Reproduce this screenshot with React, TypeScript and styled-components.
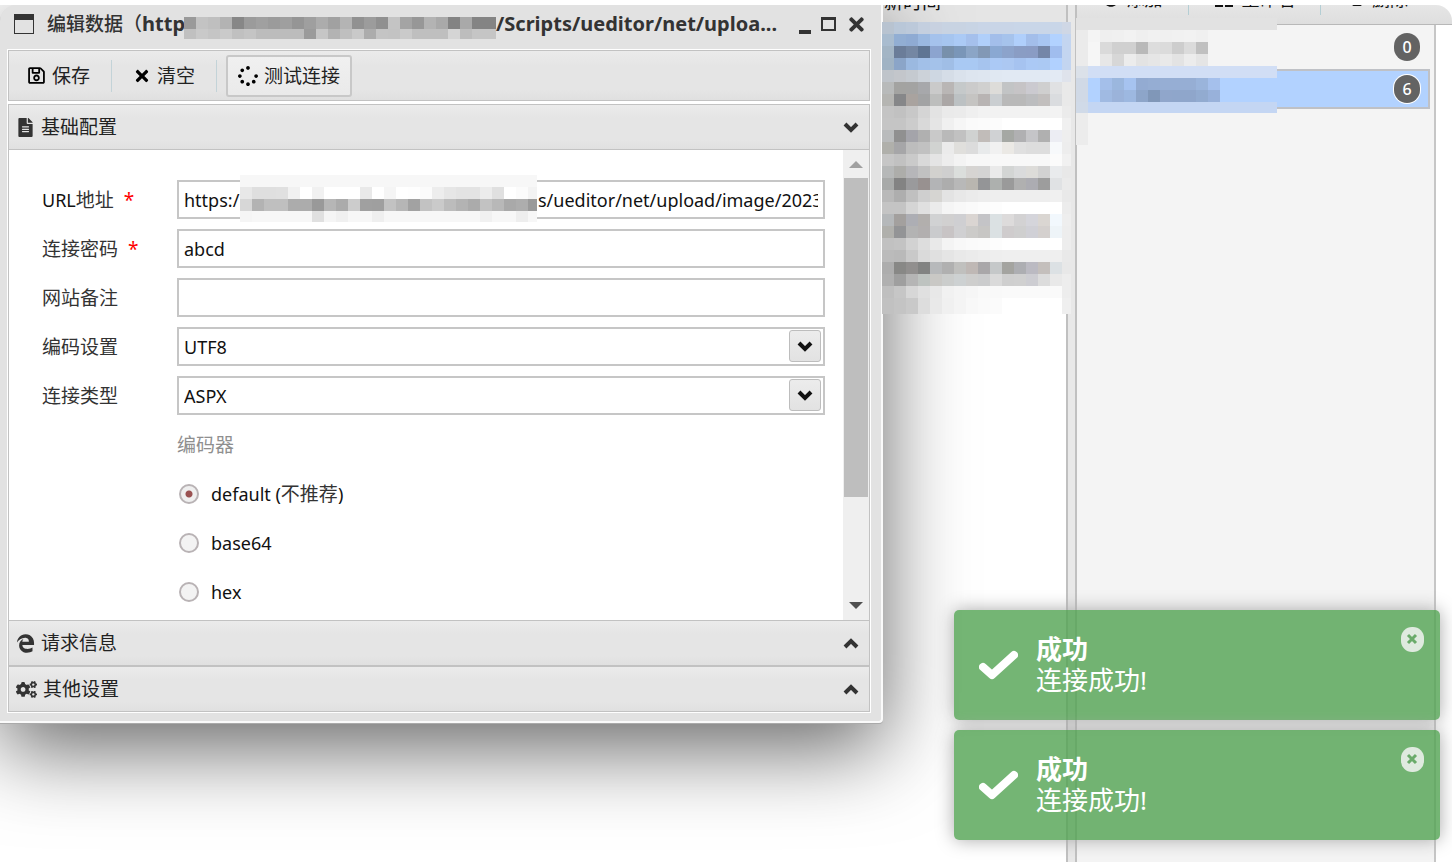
import React from 'react';
import styled, { createGlobalStyle } from 'styled-components';
import { FaRegSave, FaTimes, FaSpinner, FaFileAlt, FaCogs, FaPlusCircle, FaTrash, FaEdgeLegacy } from 'react-icons/fa';

const FONT = '"Noto Sans", "Noto Sans CJK SC", sans-serif';

const GlobalStyle = createGlobalStyle`
  * { box-sizing: border-box; }
  body { margin: 0; background: #fff; font-family: ${FONT}; font-size: 18px; color: #111; }
  button, input, select { font: inherit; color: inherit; }
`;

/* ---------- mosaic over private values ---------- */

const CELL = 12;

const MosaicSvg = styled.svg`
  display: block;
  flex: none;
`;

const toColor = (token: string) => (token.length === 2 ? `#${token}${token}${token}` : `#${token}`);

function Mosaic({ rows, width, height }: { rows: string[]; width: number; height: number }) {
  return (
    <MosaicSvg width={width} height={height} shapeRendering="crispEdges" aria-hidden="true">
      {rows.map((row, y) => {
        const cells = row.split(' ');
        const h = y === rows.length - 1 ? height - y * CELL : CELL;
        return cells.map((cell, x) => (
          <rect
            key={`${x}-${y}`}
            x={x * CELL}
            y={y * CELL}
            width={x === cells.length - 1 ? width - x * CELL : CELL}
            height={h}
            fill={toColor(cell)}
          />
        ));
      })}
    </MosaicSvg>
  );
}

const TITLE_MOSAIC = [
  '9a c3 bf b3 87 9b a0 9b 9f 95 9f ac a1 b4 91 9c 90 c4 a4 97 b3 a9 83 a9 84 84',
  'c0 c9 c5 ca c0 c4 bc bc bc bc 9b c6 b3 bf c9 ac c4 c3 ca bf bf bf d5 bd c5 c5',
];

const URL_MOSAIC = [
  'f7',
  'e8 df df e0 f1 ff f1 ff ff ff e9 ff f5 ff fe fb ed e6 e3 e3 ec e0 ff fb f3',
  'd7 b3 bf bf ac ac 99 b6 ab cc a0 9f c2 b6 a2 c2 ca bc b3 ab c2 b8 a9 ad 9a',
  'f5 f7 f7 f7 f7 f7 e0 f5 f0 f7 f7 ef f7 f7 f7 f7 f7 f7 f7 f7 f1 f7 f7 ee f7',
];

const TIMES_MOSAIC = [
  'b8c3d0 b9c7d8 bcc9da c4cfdf c8d1e0 c8d3e2 c8d3e2 c8d4e4 c9d5e7 c9d5e7 c9d5e7 c9d6e8 c9d6e8 c9d6e8 c9d6e8 cfd7e5',
  'a9bccf 92aed3 8fabd3 9ab8e0 a5c2ec a6c5ef abcaf5 a5c0ec b0cffa a3beea a6c3ec b0cffb a3beea a8c6f2 b2d2ff c3d5f0',
  'a3b5c5 6b7d99 7487a3 5f7593 8ca4cf 7890ab 7a96b8 8ba5c6 8298b5 8aa8d2 8ca3cb 8a9dc4 8a9cc4 7486a8 a0bdee c3d5f0',
  'a0b3c4 8ba5c8 9bb9e0 a2c0e8 a4c2ea a0bee6 a9c9f3 a9c9f3 a6c4ee abc9f5 acc8f2 a6c3f0 abc9f5 abc9f3 b1d1ff c3d5f0',
  'bfc4ca c3c6cb c5cad0 ccd2d9 ced7e2 d5dde7 dae2ec dde5ef dee6f0 e0e8f2 e1e9f3 e1e9f3 e1e9f3 e1e9f3 e3eaf4 dfe3ec',
  'b8baba a3a3a1 a3a3a2 a7a8ab ca b9b6b5 c5c9ca cb d0d0cf dddcd9 c2c4c5 c6c4c6 cbcad0 cf e0e1e3 e9',
  'b5b5b2 868789 a9a39f a2a3a4 bdbebd aba7a6 bcc1c3 c5c4c2 b8b4b3 caced1 b9 b9 bcbdbf c2bfbe dadcdf e9',
  'c4 c1 c8 d5 e3 ea eb ef f2 f2 f2 f2 f2 f2 f3 eb',
  'c5 c5 cc d9 e5 f0 f6 fa fb fc ff ff ff ff ff f0',
  'b9bbbc 90 a4a4aa b0 c9 b9 c1 d0d2d1 c1bcb9 d0d2d4 a5a8a4 b0b0b2 c5c5c8 b0 ecedf3 ee',
  'b0b0ab a6a6a8 bd c1 d1d3d1 eb e0dfdc dc e8eaeb f1 ebe9e5 e0 dd dd f7f9fb ed',
  'c6 c1 ca d9 e4 ed f3 f7 f7 f8 f8 f8 f8 f8 fb f1',
  'b6b8b8 adadaa b6b6b9 c1 d2d1ce cf dbdedc d6d4d2 d4 ea d3d5d4 dadbdc dddcd9 d2 e9ebed e8',
  'a8aaa9 83 9a9a9c 989190 b3b4b6 ad b8 b9b6b0 949597 adb0ae 9a b0 acacb2 9d e0e2e4 ea',
  'b9 ae c0 cf d6d5d2 e3 e8 eb ed ee ee ee ee ee f0 e9',
  'c4 c4 d5 e0 eb f5 f8 fa fc fd ff ff ff ff ff ec',
  'b5b8ba a3a09e adaeb4 b2afad d1d2d3 d1d0d0 cfcfd2 dad5d2 c4c4c7 dbe1e3 dddbdb d3d2d3 d5d5db dad6d2 f2f8fd ee',
  'b0b0ac 939496 b3 b2afaf cacbcd c8c4c5 d0d0d2 cccbc9 c7c6c4 dbe1e3 cfcccd cf d0d0d6 d4d0ce eef4f8 ed',
  'c1 c3 d2 dd e9 f4 f8 fa fb fd ff ff ff ff ff ed',
  'bb b9 c9 da e0 e5 e9 eb ed ee ef ef ef ef ef e9',
  'ad 888886 918f8e 828382 b7b9bb b0 c0c0be bfb8b5 a9a7a9 c5c8c9 a4a4a0 adaeb2 bbbac2 c4bfbc dce1e4 e8',
  'b0 9f b5 bec3c0 c9c8c5 cbcdcc cdd1d2 cececd cbcccd da cf d0 cdcdd2 dc e9 ed',
  'bf c6 d7 e0 e8 f1 f4 f6 f9 f9 fa fa fa fa fa ed',
  'c1 c4 c9 dd e9 f0 f4 f8 fa fb ff ff ff ff ff ef',
];

const GROUPS_MOSAIC = [
  'e2',
  'eb f4 ef f0 f2 ef f1 f0 f1 f2 f0 f4 f4 f4 f4 f4 f4',
  'eb f6 da d0 d0 b9 dd db cd db c0 f4 f4 f4 f4 f4 f4',
  'eb f6 e7 d7 ec e3 e6 e9 e3 ec e5 f4 f4 f4 f4 f4 f4',
  'dbe1e9 d1def5',
  'd0d9e6 b2d2ff a4bfea 9bb7de a6c3f0 93abd2 95add3 96aed4 96aed4 96aed4 9ab4db a5c0ec b2d2ff b2d2ff b2d2ff b2d2ff b2d2ff',
  'd0d9e6 b2d2ff a0bae2 9bb3da 9db8e0 8da5c9 8097b8 90a6cb 8fa6cb 8fa6cb 92abd0 98b1da b2d2ff b2d2ff b2d2ff b2d2ff b2d2ff',
  'd0dae8 c4d6f3',
];

/* fill a short row up to the column count with its last value */
const spread = (rows: string[], columns: number) =>
  rows.map((row) => {
    const cells = row.split(' ');
    while (cells.length < columns) cells.push(cells[cells.length - 1]);
    return cells.join(' ');
  });

/* ---------- page behind the dialog ---------- */

const Page = styled.main`
  position: relative;
  display: flex;
  min-height: 100vh;
  padding-top: 5px;
  overflow: hidden;
`;

const TimesPanel = styled.section`
  flex: 1;
  display: flex;
  flex-direction: column;
  align-items: flex-end;
`;

const TimesHeader = styled.div`
  width: 184px;
  height: 17px;
  overflow: hidden;
  background: #e5e5e5;
  border-left: 1px solid #fff;
  font-size: 19px;
  line-height: 19px;

  span {
    display: block;
    margin: -12px 0 0 1px;
  }
`;

const Covered = styled.div`
  position: relative;
  z-index: 3;
  width: 184px;
  height: 292px;
`;

const Splitter = styled.div`
  width: 11px;
  background: #e8e8e8;
  border: solid #c0c0c0;
  border-width: 0 2px;
`;

const GroupsPanel = styled.section`
  width: 375px;
`;

const GroupsBar = styled.header`
  display: flex;
  height: 20px;
  overflow: hidden;
  background: linear-gradient(#e6e6e6, #dedede);
  border-bottom: 1px solid #b8b8b8;
  border-top-right-radius: 16px;
`;

const BarButton = styled.button<{ $width: number }>`
  display: flex;
  align-items: center;
  justify-content: center;
  gap: 8px;
  width: ${(p) => p.$width}px;
  height: 20px;
  margin-top: -16px;
  padding: 0;
  border: 0;
  background: none;
  font-size: 18px;
  line-height: 20px;
  white-space: nowrap;
`;

const BarRule = styled.i`
  width: 1px;
  height: 10px;
  background: #b4ced4;
`;

const GroupsList = styled.ul`
  width: 359px;
  min-height: calc(100vh - 25px);
  margin: 0;
  padding: 2px 4px 0 1px;
  list-style: none;
  background: #f4f4f4;
  border-right: 2px solid #c6c6c6;
`;

const GroupItem = styled.li<{ $active?: boolean }>`
  display: flex;
  align-items: center;
  justify-content: flex-end;
  height: ${(p) => (p.$active ? 40 : 42)}px;
  padding: 0 ${(p) => (p.$active ? '8px 0 0' : '10px 2px 0')};
  background: ${(p) => (p.$active ? '#b2d2ff' : 'transparent')};
  border: ${(p) => (p.$active ? '2px solid #bfc1c6' : '0')};
`;

const Count = styled.span<{ $ring?: boolean }>`
  width: 26px;
  height: 28px;
  border-radius: 13px;
  background: #636363;
  box-shadow: ${(p) => (p.$ring ? '0 0 0 1px #fff' : 'none')};
  color: #fff;
  font-size: 16px;
  font-weight: 500;
  line-height: 28px;
  text-align: center;
`;

const GroupsCover = styled.div`
  position: absolute;
  top: 18px;
  right: 175px;
`;

const CoverTail = styled.div`
  width: 12px;
  height: 32px;
  background: #ececec;
`;

/* ---------- dialog ---------- */

const Dialog = styled.section`
  position: absolute;
  z-index: 2;
  top: 5px;
  left: 0;
  right: 569px;
  padding: 0 10px 8px 7px;
  background: #e2e2e2;
  border: solid #fafafa;
  border-width: 0 2px 2px 0;
  border-radius: 16px 0 4px 0;
  box-shadow: 0 1px 0 #aaa, 0 26px 84px rgba(0, 0, 0, 0.6);
  clip-path: inset(0 -140px -160px 0);
`;

const TitleBar = styled.header`
  display: flex;
  align-items: center;
  height: 44px;
  padding: 0 4px 6px 7px;
  color: #333;
  font-size: 19px;
  line-height: 30px;
  white-space: nowrap;
`;

const Title = styled.h1`
  flex: 1;
  display: flex;
  align-items: center;
  min-width: 0;
  margin: 0 8px 0 13px;
  font-size: 20px;
  font-weight: 700;
  line-height: 30px;
`;

const TitleLead = styled.span`
  width: 137px;
  overflow: hidden;
  em { font-style: normal; font-weight: 500; font-size: 19px; }
`;

const TitleCover = styled.span`
  flex: none;
  margin-top: 8px;
`;

const WindowButton = styled.button`
  display: flex;
  padding: 0;
  margin-left: 9px;
  border: 0;
  background: none;
  color: #333;
`;

const Frame = styled.div`
  border: 1px solid #fff;
  background: #fff;
`;

const Toolbar = styled.div`
  display: flex;
  align-items: center;
  height: 51px;
  margin-bottom: 3px;
  padding: 0 6px;
  background: linear-gradient(#ebebeb, #e5e5e5 30%, #e5e5e5 80%, #e0e0e0);
  border: 1px solid #c2c2c2;
`;

const ToolButton = styled.button<{ $active?: boolean }>`
  display: flex;
  align-items: center;
  gap: 6px;
  height: 42px;
  padding: 0 10px;
  border: 2px solid ${(p) => (p.$active ? '#c8c8c8' : 'transparent')};
  border-radius: 3px;
  background: ${(p) => (p.$active ? 'linear-gradient(#f0f0f0, #eaeaea)' : 'none')};
  font-size: 19px;
  line-height: 30px;
  color: #222;
  white-space: nowrap;

  svg { color: #000; }
`;

const ToolRule = styled.i`
  width: 1px;
  height: 32px;
  margin: 0 9px;
  background: #c3d3d8;
`;

const SectionHead = styled.button`
  display: flex;
  align-items: center;
  width: 100%;
  height: 46px;
  padding: 0 10px 0 7px;
  border: 1px solid #c2c2c2;
  background: linear-gradient(#ebebeb, #e5e5e5 30%, #e5e5e5 80%, #e0e0e0);
  color: #333;
  font-size: 19px;
  line-height: 30px;
  text-align: left;
`;

const SectionLabel = styled.span`
  flex: 1;
  margin-left: 6px;
  color: #222;
`;

const Body = styled.div`
  display: flex;
  height: 470px;
  border: solid #c2c2c2;
  border-width: 0 1px;
`;

const Form = styled.form`
  flex: 1;
  display: flex;
  flex-direction: column;
  gap: 10px;
  min-width: 0;
  padding: 30px 18px 0 33px;
  overflow: hidden;
`;

const Row = styled.div`
  display: flex;
  align-items: center;
  flex: none;
  height: 39px;
`;

const Label = styled.label`
  width: 135px;
  flex: none;
  color: #333;
  font-size: 19px;
  line-height: 30px;

  b { margin-left: 10px; color: #f00; font-weight: 400; }
  span { font-size: 18px; color: #111; }
`;

const Box = styled.div`
  position: relative;
  flex: 1;
  display: flex;
  align-items: center;
  min-width: 0;
  height: 39px;
  padding: 0 5px;
  border: 2px solid #c6c6c6;
`;

const Input = styled.input<{ $width?: number }>`
  flex: ${(p) => (p.$width ? 'none' : '1')};
  width: ${(p) => (p.$width ? `${p.$width}px` : 'auto')};
  min-width: 0;
  height: 30px;
  padding: 0;
  border: 0;
  outline: 0;
  background: none;
  font-size: 18px;
`;

const UrlCover = styled.div`
  flex: none;
  margin: -3px 1px 0 0;
`;

const Select = styled.select`
  flex: 1;
  height: 34px;
  padding: 0;
  border: 0;
  outline: 0;
  appearance: none;
  background: none;
  font-size: 18px;
`;

const SelectArrow = styled.span`
  position: absolute;
  top: 1px;
  right: 2px;
  display: flex;
  align-items: center;
  justify-content: center;
  width: 32px;
  height: 32px;
  border: 1px solid #bdbdbd;
  border-radius: 3px;
  background: linear-gradient(#ececec, #e2e2e2);
  pointer-events: none;
`;

const GroupTitle = styled.div`
  margin-left: 135px;
  color: #8f8f8f;
  font-size: 19px;
  line-height: 30px;
`;

const RadioLabel = styled.label`
  display: flex;
  align-items: center;
  gap: 12px;
  margin-left: 137px;
  font-size: 18px;
  line-height: 30px;

  em { font-style: normal; font-size: 19px; color: #333; }
`;

const Radio = styled.input`
  appearance: none;
  width: 20px;
  height: 20px;
  margin: 0;
  border: 2px solid #b9b3b5;
  border-radius: 50%;
  background: #f3f3f3;

  &:checked {
    background: radial-gradient(circle, #9a5252 0 3px, #efefef 4px);
  }
`;

const ScrollBar = styled.div`
  display: flex;
  flex-direction: column;
  align-items: center;
  width: 26px;
  padding: 11px 0;
  background: #efefef;
`;

const Thumb = styled.div`
  width: 24px;
  height: 319px;
  margin: 10px 0 auto;
  background: #bebebe;
`;

const Arrow = styled.i<{ $down?: boolean }>`
  border: solid transparent;
  border-width: ${(p) => (p.$down ? '7px 7px 0' : '0 7px 7px')};
  border-top-color: ${(p) => (p.$down ? '#505050' : 'transparent')};
  border-bottom-color: ${(p) => (p.$down ? 'transparent' : '#a0a0a0')};
`;

/* ---------- notifications ---------- */

const Toasts = styled.aside`
  position: absolute;
  z-index: 4;
  right: 12px;
  top: 610px;
  display: flex;
  flex-direction: column;
  gap: 10px;
  width: 486px;
`;

const ToastCard = styled.div`
  display: flex;
  height: 110px;
  padding: 24px 16px 0 25px;
  border-radius: 5px;
  background: rgba(81, 163, 81, 0.8);
  box-shadow: 0 0 18px #a9a9a9;
  color: #fff;
  font-size: 26px;
  line-height: 31px;
`;

const ToastText = styled.div`
  flex: 1;
  margin-left: 18px;
  strong { display: block; }
`;

const CloseButton = styled.button`
  display: flex;
  align-self: flex-start;
  padding: 0;
  margin-top: -7px;
  border: 0;
  background: none;
`;

const CheckHolder = styled.span`
  padding-top: 16px;
`;

function Chevron({ up }: { up?: boolean }) {
  return (
    <svg width="16" height="12" viewBox="0 0 16 12" fill="none" stroke="currentColor" strokeWidth="4">
      <polyline points={up ? '2,10 8,4 14,10' : '2,3 8,9 14,3'} />
    </svg>
  );
}

function Toast() {
  return (
    <ToastCard role="status">
      <CheckHolder>
        <svg width="39" height="31" viewBox="0 0 39 31" fill="none" stroke="#fff" strokeWidth="8" strokeLinecap="round" strokeLinejoin="round">
          <polyline points="4,17 13,25 35,5" />
        </svg>
      </CheckHolder>
      <ToastText>
        <strong>成功</strong>
        连接成功!
      </ToastText>
      <CloseButton type="button" aria-label="关闭">
        <svg width="24" height="25" viewBox="0 0 24 25">
          <rect x="1" y="0" width="23" height="25" rx="11" fill="#dfeadf" />
          <path d="M8 8 L16 16 M16 8 L8 16" stroke="#6aab6a" strokeWidth="3" />
        </svg>
      </CloseButton>
    </ToastCard>
  );
}

function TextRow({ id, label, value, required }: { id: string; label: string; value: string; required?: boolean }) {
  return (
    <Row>
      <Label htmlFor={id}>{label}{required && <b>*</b>}</Label>
      <Box><Input id={id} defaultValue={value} /></Box>
    </Row>
  );
}

function SelectRow({ id, label, value }: { id: string; label: string; value: string }) {
  return (
    <Row>
      <Label htmlFor={id}>{label}</Label>
      <Box>
        <Select id={id} defaultValue={value}><option>{value}</option></Select>
        <SelectArrow><Chevron /></SelectArrow>
      </Box>
    </Row>
  );
}

export default function App() {
  return (
    <Page>
      <GlobalStyle />
      <TimesPanel>
        <TimesHeader><span>新时间</span></TimesHeader>
        <Covered><Mosaic rows={TIMES_MOSAIC} width={189} height={292} /></Covered>
      </TimesPanel>
      <Splitter />
      <GroupsPanel>
        <GroupsBar>
          <BarButton type="button" $width={111}><FaPlusCircle size={16} />添加</BarButton>
          <BarRule />
          <BarButton type="button" $width={131}>
            <svg width="20" height="16" viewBox="0 0 20 16" fill="none" stroke="currentColor" strokeWidth="3">
              <path d="M5 14 V3 H15 V14 M1 15 H9 M11 15 H19" />
            </svg>
            重命名
          </BarButton>
          <BarRule />
          <BarButton type="button" $width={116}><FaTrash size={14} />删除</BarButton>
        </GroupsBar>
        <GroupsList>
          <GroupItem><Count>0</Count></GroupItem>
          <GroupItem $active><Count $ring>6</Count></GroupItem>
        </GroupsList>
      </GroupsPanel>
      <GroupsCover>
        <Mosaic rows={spread(GROUPS_MOSAIC, 17)} width={201} height={95} />
        <CoverTail />
      </GroupsCover>

      <Dialog>
        <TitleBar>
          <svg width="20" height="20" viewBox="0 0 20 20">
            <rect x="0.5" y="0.5" width="19" height="19" fill="none" stroke="#333" />
            <rect width="20" height="6" fill="#333" />
          </svg>
          <Title>
            <TitleLead><em>编辑数据（</em>http</TitleLead>
            <TitleCover><Mosaic rows={TITLE_MOSAIC} width={312} height={22} /></TitleCover>
            <span>/Scripts/ueditor/net/uploa...</span>
          </Title>
          <WindowButton type="button" aria-label="最小化">
            <svg width="13" height="20"><rect y="16" width="12" height="4" fill="#333" /></svg>
          </WindowButton>
          <WindowButton type="button" aria-label="最大化">
            <svg width="16" height="14"><path d="M1 1 H14 V13 H1 Z M1 2 H14" fill="none" stroke="#333" strokeWidth="2" /></svg>
          </WindowButton>
          <WindowButton type="button" aria-label="关闭"><FaTimes size={21} /></WindowButton>
        </TitleBar>
        <Frame>
          <Toolbar>
            <ToolButton type="button"><FaRegSave size={19} />保存</ToolButton>
            <ToolRule />
            <ToolButton type="button"><FaTimes size={18} />清空</ToolButton>
            <ToolRule />
            <ToolButton type="button" $active><FaSpinner size={20} />测试连接</ToolButton>
          </Toolbar>
          <SectionHead type="button">
            <FaFileAlt size={19} /><SectionLabel>基础配置</SectionLabel><Chevron />
          </SectionHead>
          <Body>
            <Form>
              <Row>
                <Label htmlFor="url"><span>URL</span>地址<b>*</b></Label>
                <Box>
                  <Input id="url" $width={56} defaultValue="https:/" />
                  <UrlCover><Mosaic rows={spread(URL_MOSAIC, 25)} width={297} height={47} /></UrlCover>
                  <Input aria-label="URL路径" defaultValue="s/ueditor/net/upload/image/2023" />
                </Box>
              </Row>
              <TextRow id="password" label="连接密码" value="abcd" required />
              <TextRow id="note" label="网站备注" value="" />
              <SelectRow id="charset" label="编码设置" value="UTF8" />
              <SelectRow id="kind" label="连接类型" value="ASPX" />
              <Row><GroupTitle>编码器</GroupTitle></Row>
              <Row><RadioLabel><Radio type="radio" name="encoder" defaultChecked /><span>default (<em>不推荐</em>)</span></RadioLabel></Row>
              <Row><RadioLabel><Radio type="radio" name="encoder" />base64</RadioLabel></Row>
              <Row><RadioLabel><Radio type="radio" name="encoder" />hex</RadioLabel></Row>
            </Form>
            <ScrollBar><Arrow /><Thumb /><Arrow $down /></ScrollBar>
          </Body>
          <SectionHead type="button">
            <FaEdgeLegacy size={19} /><SectionLabel>请求信息</SectionLabel><Chevron up />
          </SectionHead>
          <SectionHead type="button">
            <FaCogs size={21} /><SectionLabel>其他设置</SectionLabel><Chevron up />
          </SectionHead>
        </Frame>
      </Dialog>

      <Toasts>
        <Toast />
        <Toast />
      </Toasts>
    </Page>
  );
}
